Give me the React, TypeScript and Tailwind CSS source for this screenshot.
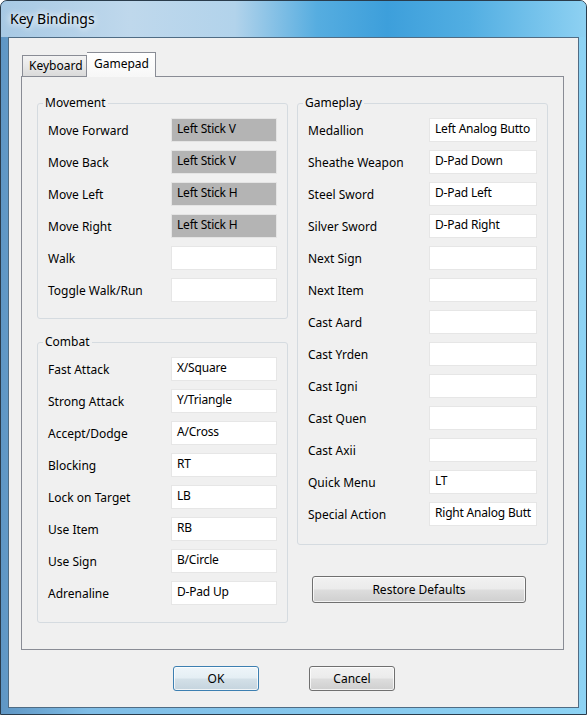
import React from "react";

const FONT = "font-['Noto_Sans','Segoe_UI',sans-serif]";

type Binding = { label: string; value: string; grey?: boolean };

const movement: Binding[] = [
  { label: "Move Forward", value: "Left Stick V", grey: true },
  { label: "Move Back", value: "Left Stick V", grey: true },
  { label: "Move Left", value: "Left Stick H", grey: true },
  { label: "Move Right", value: "Left Stick H", grey: true },
  { label: "Walk", value: "" },
  { label: "Toggle Walk/Run", value: "" },
];

const combat: Binding[] = [
  { label: "Fast Attack", value: "X/Square" },
  { label: "Strong Attack", value: "Y/Triangle" },
  { label: "Accept/Dodge", value: "A/Cross" },
  { label: "Blocking", value: "RT" },
  { label: "Lock on Target", value: "LB" },
  { label: "Use Item", value: "RB" },
  { label: "Use Sign", value: "B/Circle" },
  { label: "Adrenaline", value: "D-Pad Up" },
];

// the edit boxes are too narrow for the full names, the dialog shows them cut
const gameplay: Binding[] = [
  { label: "Medallion", value: "Left Analog Butto" },
  { label: "Sheathe Weapon", value: "D-Pad Down" },
  { label: "Steel Sword", value: "D-Pad Left" },
  { label: "Silver Sword", value: "D-Pad Right" },
  { label: "Next Sign", value: "" },
  { label: "Next Item", value: "" },
  { label: "Cast Aard", value: "" },
  { label: "Cast Yrden", value: "" },
  { label: "Cast Igni", value: "" },
  { label: "Cast Quen", value: "" },
  { label: "Cast Axii", value: "" },
  { label: "Quick Menu", value: "LT" },
  { label: "Special Action", value: "Right Analog Butt" },
];

function Row({ b, wide }: { b: Binding; wide?: boolean }) {
  return (
    <div className="flex items-center justify-between h-[24px]">
      <span className="mt-[2px] leading-[16px]">{b.label}</span>
      <div
        className={`${wide ? "w-[108px]" : "w-[106px]"} h-[24px] border pl-[5px] pt-[2px] leading-[16px] tracking-[-0.2px] overflow-hidden whitespace-nowrap ${
          b.grey ? "bg-[#b4b4b4] border-[#e4e4e4]" : "bg-white border-[#e6e6e6]"
        }`}
      >
        {b.value}
      </div>
    </div>
  );
}

function Group({
  title,
  items,
  wide,
  className = "",
}: {
  title: string;
  items: Binding[];
  wide?: boolean;
  className?: string;
}) {
  return (
    <fieldset
      className={`border border-[#d5dbe0] rounded-[3px] px-[10px] pt-[7px] flex flex-col gap-[8px] ${className}`}
    >
      <legend className="-ml-[5px] px-[2px] leading-[16px]">{title}</legend>
      {items.map((b) => (
        <Row key={b.label} b={b} wide={wide} />
      ))}
    </fieldset>
  );
}

function Button({
  children,
  primary,
  className = "",
}: {
  children: React.ReactNode;
  primary?: boolean;
  className?: string;
}) {
  return (
    <button
      type="button"
      className={`flex items-center justify-center rounded-[3px] border text-[12px] text-black shadow-[inset_0_0_0_1px_rgba(255,255,255,0.75)] ${
        primary
          ? "border-[#3c7fb1] bg-[linear-gradient(180deg,#eef5f9_0%,#e4eef4_48%,#d3e0e8_52%,#c5d4de_100%)]"
          : "border-[#707070] bg-[linear-gradient(180deg,#f2f2f2_0%,#ebebeb_48%,#dddddd_52%,#cfcfcf_100%)]"
      } ${className}`}
    >
      {children}
    </button>
  );
}

export default function App() {
  return (
    <div
      className={`${FONT} w-[587px] h-[715px] flex flex-col border border-[#2a3c4c] rounded-t-[7px] overflow-hidden bg-[linear-gradient(90deg,#5f96c4_0%,#7fbde6_15%,#8dd3f4_100%)] text-[12px] text-black`}
    >
      <div className="h-[36px] flex items-center pl-[9px] bg-[linear-gradient(90deg,#a7c9e4_0%,#bfd8ec_22%,#b2d3eb_40%,#56ade0_54%,#3d9fdb_66%,#52aee2_80%,#8ed1f2_100%)]">
        <span className="text-[14px] leading-none text-black [text-shadow:0_0_6px_#ffffff,0_0_10px_#ffffff]">
          Key Bindings
        </span>
      </div>

      <div className="mx-[7px] h-[671px] border border-[#4f6c84] bg-[#f0f0f0] flex flex-col">
        <div className="pt-[14px] pl-[13px] h-[38px] flex items-end">
          <div className="w-[65px] h-[21px] border border-b-0 border-[#898c95] bg-[linear-gradient(180deg,#f3f3f3_0%,#e8e8e8_50%,#dadada_100%)] flex items-center pl-[6px] leading-[16px]">
            Keyboard
          </div>
          <div className="relative z-10 -mb-px w-[69px] h-[25px] border border-l-0 border-b-0 border-[#898c95] bg-[linear-gradient(180deg,#ffffff_0%,#f7f7f7_100%)] flex items-start pt-[3px] pl-[7px] leading-[16px]">
            Gamepad
          </div>
        </div>

        <div className="ml-[12px] w-[543px] h-[574px] border border-[#898c95] bg-[#f0f0f0] pt-[18px] px-[15px] flex gap-[9px]">
          <div className="w-[251px] flex flex-col">
            <Group title="Movement" items={movement} className="pb-[16px]" />
            <Group title="Combat" items={combat} className="mt-[15px] pb-[17px]" />
          </div>
          <div className="w-[251px] flex flex-col">
            <Group title="Gameplay" items={gameplay} wide className="pb-[18px]" />
            <Button className="mt-[31px] ml-[15px] w-[214px] h-[27px]">
              Restore Defaults
            </Button>
          </div>
        </div>

        <div className="mt-[16px] pl-[164px] flex gap-[50px]">
          <Button primary className="w-[86px] h-[25px]">
            OK
          </Button>
          <Button className="w-[86px] h-[25px]">Cancel</Button>
        </div>
      </div>
    </div>
  );
}
